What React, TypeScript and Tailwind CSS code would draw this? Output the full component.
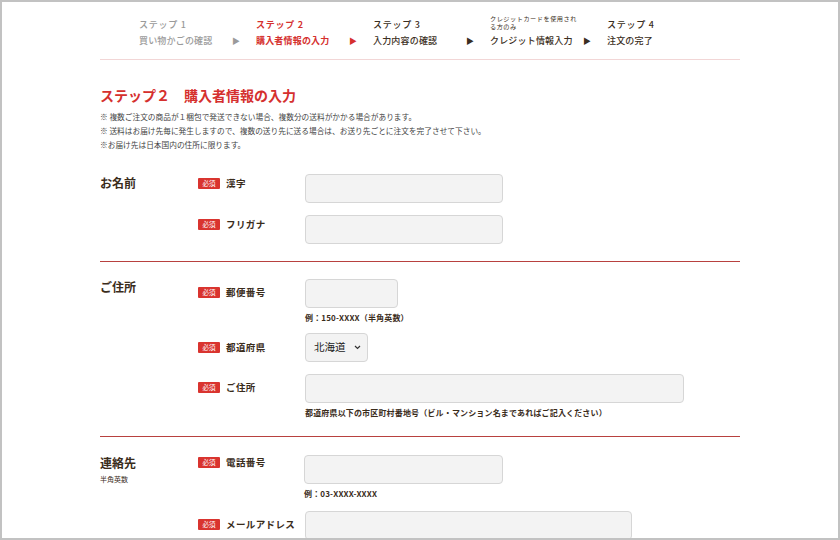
import React from "react";

const Badge = () => (
  <span className="inline-flex h-[11px] w-[22px] items-center justify-center rounded-[1px] bg-[#d9342f] text-[6.5px] leading-none text-white">
    必須
  </span>
);

const FieldLabel = ({ text, mt }: { text: string; mt: string }) => (
  <div className={`flex h-[12px] w-[107px] shrink-0 items-center gap-[6px] self-start ${mt}`}>
    <Badge />
    <span className="text-[9.5px] font-bold leading-[12px] tracking-[0.04em] text-[#3a2c1b]">{text}</span>
  </div>
);

const Input = ({ w }: { w: string }) => (
  <div className={`h-[29px] ${w} rounded-[4px] border border-[#d6d6d6] bg-[#f3f3f3]`} />
);

const Hint = ({ text }: { text: string }) => (
  <div className="mt-[4px] text-[8px] font-bold leading-[12px] tracking-[0.02em] text-[#3a2c1b]">{text}</div>
);

export default function App() {
  return (
    <div className="h-[540px] w-[840px] overflow-hidden border-2 border-[#c2c2c2] bg-white font-['Noto_Sans_CJK_JP',sans-serif]">
      <div className="ml-[98px] w-[640px]">
        {/* progress */}
        <div className="flex pl-[39px] pt-[13px]">
          {[
            { top: "ステップ 1", bottom: "買い物かごの確認", state: "done" },
            { top: "ステップ 2", bottom: "購入者情報の入力", state: "current" },
            { top: "ステップ 3", bottom: "入力内容の確認", state: "next" },
            { top: "", bottom: "クレジット情報入力", state: "next", small: true },
            { top: "ステップ 4", bottom: "注文の完了", state: "next", last: true },
          ].map((s, i) => {
            const color =
              s.state === "done" ? "text-[#9a9a9a]" : s.state === "current" ? "text-[#d5302e]" : "text-[#3a2e22]";
            const weight = s.state === "current" ? "font-bold" : "font-medium";
            return (
              <div key={i} className="flex w-[117px] shrink-0">
                <div className="flex w-[93px] shrink-0 flex-col">
                  <div className="flex h-[16px] items-end">
                    {s.small ? (
                      <div className="text-[6.2px] leading-[8px] tracking-[0.08em] text-[#3a2e22]">
                        クレジットカードを使用され
                        <br />
                        る方のみ
                      </div>
                    ) : (
                      <div className={`text-[9px] leading-[12px] tracking-[0.08em] ${color} ${weight}`}>{s.top}</div>
                    )}
                  </div>
                  <div className={`mt-[4px] whitespace-nowrap text-[9px] leading-[12px] tracking-[0.02em] ${color} ${weight}`}>
                    {s.bottom}
                  </div>
                </div>
                {!s.last && (
                  <div className={`mt-[20px] text-[8px] leading-[12px] ${color}`}>▶</div>
                )}
              </div>
            );
          })}
        </div>
        <div className="mt-[12px] h-px bg-[#f2d6d6]" />

        {/* heading */}
        <h1 className="mt-[25px] text-[14px] font-bold leading-[20px] text-[#d5302e]">ステップ２　購入者情報の入力</h1>
        <div className="mt-[5px] text-[7.7px] leading-[14px] text-[#444]">
          <p>※ 複数ご注文の商品が１梱包で発送できない場合、複数分の送料がかかる場合があります。</p>
          <p>※ 送料はお届け先毎に発生しますので、複数の送り先に送る場合は、お送り先ごとに注文を完了させて下さい。</p>
          <p>※お届け先は日本国内の住所に限ります。</p>
        </div>

        {/* お名前 */}
        <div className="mt-[4px] flex border-b border-[#b8413f] pb-[17px] pt-[18px]">
          <div className="w-[98px] shrink-0 pt-[1px] text-[12px] font-bold leading-[16px] text-[#3a2c1b]">お名前</div>
          <div className="flex flex-col gap-[12px]">
            <div className="flex">
              <FieldLabel text="漢字" mt="mt-[3px]" />
              <Input w="w-[198px]" />
            </div>
            <div className="flex">
              <FieldLabel text="フリガナ" mt="mt-[3px]" />
              <Input w="w-[198px]" />
            </div>
          </div>
        </div>

        {/* ご住所 */}
        <div className="flex border-b border-[#b8413f] pb-[17px] pt-[17px]">
          <div className="w-[98px] shrink-0 text-[12px] font-bold leading-[16px] text-[#3a2c1b]">ご住所</div>
          <div className="flex flex-col">
            <div className="flex">
              <FieldLabel text="郵便番号" mt="mt-[7px]" />
              <div>
                <Input w="w-[93px]" />
                <Hint text="例：150-XXXX（半角英数）" />
              </div>
            </div>
            <div className="mt-[9px] flex">
              <FieldLabel text="都道府県" mt="mt-[8px]" />
              <div className="flex h-[29px] w-[63px] items-center justify-between rounded-[4px] border border-[#d6d6d6] bg-[#f3f3f3] pl-[8px] pr-[6px]">
                <span className="text-[10.5px] leading-none text-[#222]">北海道</span>
                <svg width="7" height="5" viewBox="0 0 7 5">
                  <path d="M1 1l2.5 2.5L6 1" fill="none" stroke="#333" strokeWidth="1.2" />
                </svg>
              </div>
            </div>
            <div className="mt-[12px] flex">
              <FieldLabel text="ご住所" mt="mt-[7px]" />
              <div>
                <Input w="w-[379px]" />
                <Hint text="都道府県以下の市区町村番地号（ビル・マンション名まであればご記入ください）" />
              </div>
            </div>
          </div>
        </div>

        {/* 連絡先 */}
        <div className="flex pt-[18px]">
          <div className="w-[98px] shrink-0">
            <div className="text-[12px] font-bold leading-[16px] text-[#3a2c1b]">連絡先</div>
            <div className="mt-[3px] text-[7px] leading-[10px] text-[#3a2c1b]">半角英数</div>
          </div>
          <div className="flex flex-col">
            <div className="flex">
              <FieldLabel text="電話番号" mt="mt-[1px]" />
              <div className="-ml-[1px]">
                <Input w="w-[199px]" />
                <Hint text="例：03-XXXX-XXXX" />
              </div>
            </div>
            <div className="mt-[11px] flex">
              <FieldLabel text="メールアドレス" mt="mt-[7px]" />
              <Input w="w-[327px]" />
            </div>
          </div>
        </div>
      </div>
    </div>
  );
}
